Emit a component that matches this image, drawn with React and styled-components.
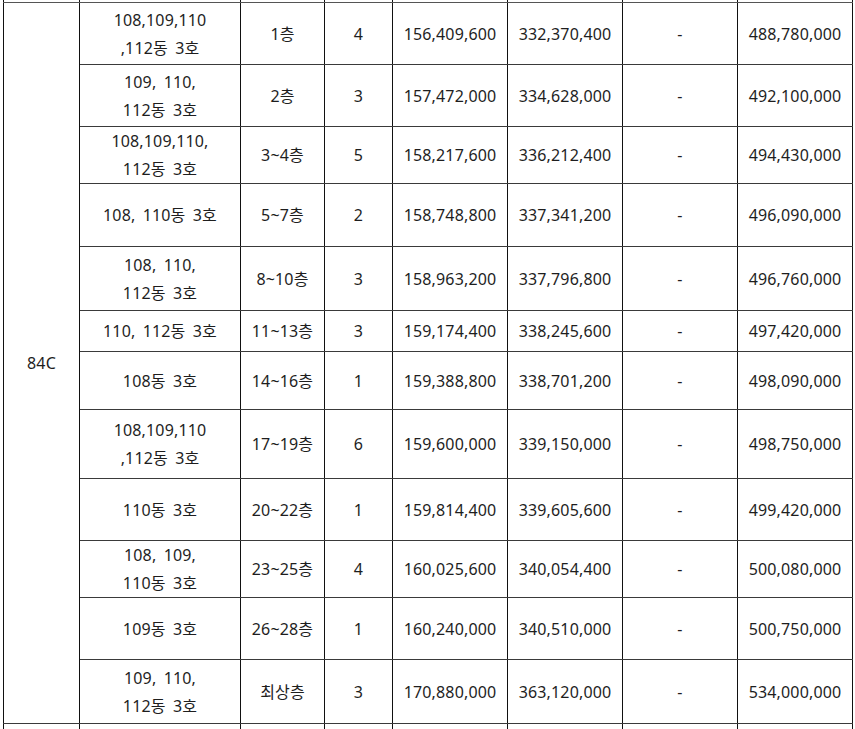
import React from "react";
import styled, { createGlobalStyle } from "styled-components";

const Global = createGlobalStyle`
  html, body { margin: 0; padding: 0; background: #fff; }
  body { font-family: "Noto Sans", "Noto Sans CJK KR", sans-serif; color: #1e1e1e; overflow: hidden; }
`;

const Page = styled.div`
  padding-left: 3px;
  height: 729px;
  overflow: hidden;
`;

const Table = styled.table`
  border-collapse: collapse;
  table-layout: fixed;
  width: 849px;
`;

const Row = styled.tr`
  height: ${(p) => p.$h}px;
`;

const Cell = styled.td`
  border-top: 1px solid #3a3a3a;
  border-bottom: 1px solid #3a3a3a;
  border-left: 1px solid #111;
  border-right: 1px solid #111;
  padding: 0;
  text-align: center;
  vertical-align: middle;
  font-size: 16px;
  line-height: 28px;
  letter-spacing: 0.15px;
  word-spacing: 3px;
  white-space: nowrap;
`;

const EdgeCell = styled.td`
  border-left: 1px solid #111;
  border-right: 1px solid #111;
  border-top: ${(p) => (p.$bottom ? "1px solid #555" : "none")};
  border-bottom: ${(p) => (p.$bottom ? "none" : "1px solid #555")};
  padding: 0;
  height: ${(p) => p.$h}px;
`;

const widths = [76, 161, 84, 68, 115, 115, 115, 115];

const rows = [
  { h: 62, dong: ["108,109,110", ",112동 3호"], floor: "1층", n: 4, a: "156,409,600", b: "332,370,400", t: "488,780,000" },
  { h: 62, dong: ["109, 110,", "112동 3호"], floor: "2층", n: 3, a: "157,472,000", b: "334,628,000", t: "492,100,000" },
  { h: 57, dong: ["108,109,110,", "112동 3호"], floor: "3~4층", n: 5, a: "158,217,600", b: "336,212,400", t: "494,430,000" },
  { h: 63, dong: ["108, 110동 3호"], floor: "5~7층", n: 2, a: "158,748,800", b: "337,341,200", t: "496,090,000" },
  { h: 64, dong: ["108, 110,", "112동 3호"], floor: "8~10층", n: 3, a: "158,963,200", b: "337,796,800", t: "496,760,000" },
  { h: 41, dong: ["110, 112동 3호"], floor: "11~13층", n: 3, a: "159,174,400", b: "338,245,600", t: "497,420,000" },
  { h: 58, dong: ["108동 3호"], floor: "14~16층", n: 1, a: "159,388,800", b: "338,701,200", t: "498,090,000" },
  { h: 69, dong: ["108,109,110", ",112동 3호"], floor: "17~19층", n: 6, a: "159,600,000", b: "339,150,000", t: "498,750,000" },
  { h: 62, dong: ["110동 3호"], floor: "20~22층", n: 1, a: "159,814,400", b: "339,605,600", t: "499,420,000" },
  { h: 56, dong: ["108, 109,", "110동 3호"], floor: "23~25층", n: 4, a: "160,025,600", b: "340,054,400", t: "500,080,000" },
  { h: 62, dong: ["109동 3호"], floor: "26~28층", n: 1, a: "160,240,000", b: "340,510,000", t: "500,750,000" },
  { h: 64, dong: ["109, 110,", "112동 3호"], floor: "최상층", n: 3, a: "170,880,000", b: "363,120,000", t: "534,000,000" },
];

export default function App() {
  return (
    <Page>
      <Global />
      <Table>
        <colgroup>
          {widths.map((w, i) => (
            <col key={i} style={{ width: w }} />
          ))}
        </colgroup>
        <tbody>
          <tr>
            {widths.map((_, i) => (
              <EdgeCell key={i} $h={2} />
            ))}
          </tr>
          {rows.map((r, i) => (
            <Row key={i} $h={r.h}>
              {i === 0 && <Cell rowSpan={rows.length}>84C</Cell>}
              <Cell>
                {r.dong.map((l, j) => (
                  <div key={j}>{l}</div>
                ))}
              </Cell>
              <Cell>{r.floor}</Cell>
              <Cell>{r.n}</Cell>
              <Cell>{r.a}</Cell>
              <Cell>{r.b}</Cell>
              <Cell>-</Cell>
              <Cell>{r.t}</Cell>
            </Row>
          ))}
          <tr>
            {widths.map((_, i) => (
              <EdgeCell key={i} $h={20} $bottom />
            ))}
          </tr>
        </tbody>
      </Table>
    </Page>
  );
}
